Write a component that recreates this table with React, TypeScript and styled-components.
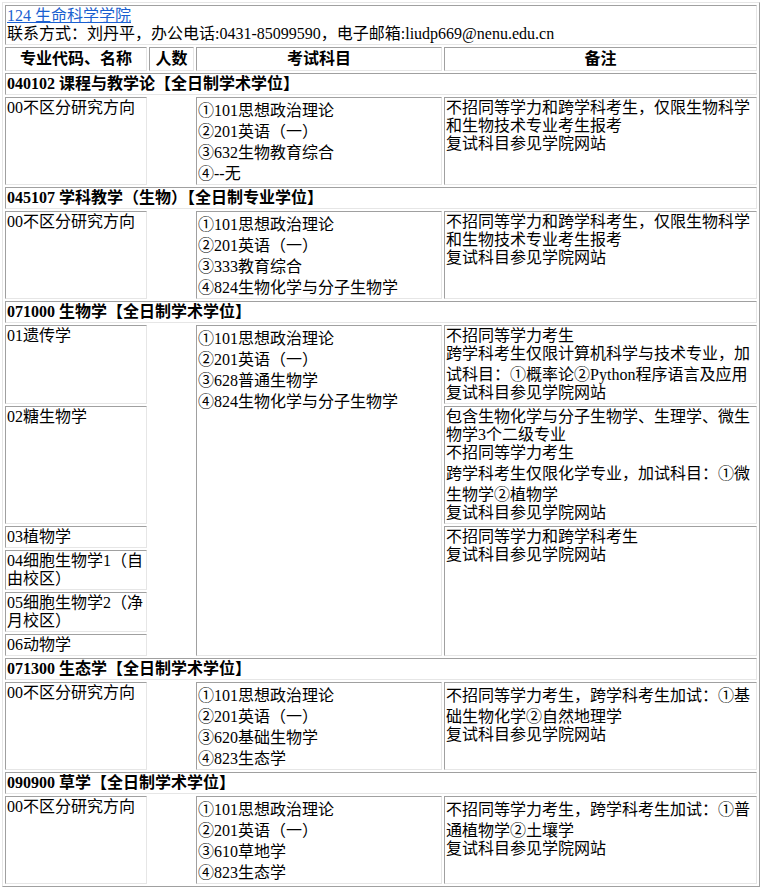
import React from "react";
import styled, { createGlobalStyle } from "styled-components";

const Global = createGlobalStyle`
  html, body { margin: 0; padding: 0; background: #ffffff; }
  body {
    font-family: "Liberation Serif", "Noto Sans CJK SC", serif;
    font-size: 16px;
    color: #000000;
  }
`;

const Page = styled.div`
  padding: 2px 0 0 2px;
`;

const Table = styled.table`
  width: 758px;
  table-layout: fixed;
  border-collapse: separate;
  border-spacing: 2px;
  empty-cells: hide;
  border-style: solid;
  border-width: 1px;
  border-color: #e6e6e6 #a0a0a0 #a0a0a0 #e6e6e6;
  font-size: 16px;
  line-height: 18px;
`;

const Cell = styled.td<{ $center?: boolean }>`
  box-sizing: border-box;
  padding: 1px;
  vertical-align: top;
  text-align: ${(p) => (p.$center ? "center" : "left")};
  border-style: solid;
  border-width: 1px;
  border-color: #a0a0a0 #e6e6e6 #e6e6e6 #a0a0a0;
  overflow-wrap: anywhere;
`;

const Head = styled.th`
  box-sizing: border-box;
  padding: 1px;
  font-weight: bold;
  text-align: center;
  vertical-align: middle;
  line-height: 20px;
  border-style: solid;
  border-width: 1px;
  border-color: #a0a0a0 #e6e6e6 #e6e6e6 #a0a0a0;
`;

const SectionCell = styled(Cell)`
  font-weight: bold;
  vertical-align: middle;
`;

const Link = styled.a`
  color: #1a5fd0;
  text-decoration: underline;
`;

const Line = styled.div``;

const Circ = styled.span`
  font-family: "Noto Sans CJK SC", "DejaVu Sans", sans-serif;
  font-weight: normal;
  line-height: 20.67px;
`;

function withCircles(text: string) {
  const parts = text.split(/([①②③④⑤⑥⑦⑧⑨])/);
  return parts.map((p, i) =>
    /[①②③④⑤⑥⑦⑧⑨]/.test(p) ? <Circ key={i}>{p}</Circ> : <React.Fragment key={i}>{p}</React.Fragment>
  );
}

type Remark = { span: number; lines: string[] };
type Section = {
  code: string;
  title: string;
  dirs: string[];
  exams: string[];
  remarks: Remark[];
};

const STD_REMARK = ["不招同等学力和跨学科考生，仅限生物科学和生物技术专业考生报考", "复试科目参见学院网站"];

const sections: Section[] = [
  {
    code: "040102",
    title: "课程与教学论【全日制学术学位】",
    dirs: ["00不区分研究方向"],
    exams: ["①101思想政治理论", "②201英语（一）", "③632生物教育综合", "④--无"],
    remarks: [{ span: 1, lines: STD_REMARK }],
  },
  {
    code: "045107",
    title: "学科教学（生物）【全日制专业学位】",
    dirs: ["00不区分研究方向"],
    exams: ["①101思想政治理论", "②201英语（一）", "③333教育综合", "④824生物化学与分子生物学"],
    remarks: [{ span: 1, lines: STD_REMARK }],
  },
  {
    code: "071000",
    title: "生物学【全日制学术学位】",
    dirs: ["01遗传学", "02糖生物学", "03植物学", "04细胞生物学1（自由校区）", "05细胞生物学2（净月校区）", "06动物学"],
    exams: ["①101思想政治理论", "②201英语（一）", "③628普通生物学", "④824生物化学与分子生物学"],
    remarks: [
      {
        span: 1,
        lines: [
          "不招同等学力考生",
          "跨学科考生仅限计算机科学与技术专业，加试科目：①概率论②Python程序语言及应用",
          "复试科目参见学院网站",
        ],
      },
      {
        span: 1,
        lines: [
          "包含生物化学与分子生物学、生理学、微生物学3个二级专业",
          "不招同等学力考生",
          "跨学科考生仅限化学专业，加试科目：①微生物学②植物学",
          "复试科目参见学院网站",
        ],
      },
      { span: 4, lines: ["不招同等学力和跨学科考生", "复试科目参见学院网站"] },
    ],
  },
  {
    code: "071300",
    title: "生态学【全日制学术学位】",
    dirs: ["00不区分研究方向"],
    exams: ["①101思想政治理论", "②201英语（一）", "③620基础生物学", "④823生态学"],
    remarks: [{ span: 1, lines: ["不招同等学力考生，跨学科考生加试：①基础生物化学②自然地理学", "复试科目参见学院网站"] }],
  },
  {
    code: "090900",
    title: "草学【全日制学术学位】",
    dirs: ["00不区分研究方向"],
    exams: ["①101思想政治理论", "②201英语（一）", "③610草地学", "④823生态学"],
    remarks: [{ span: 1, lines: ["不招同等学力考生，跨学科考生加试：①普通植物学②土壤学", "复试科目参见学院网站"] }],
  },
];

function SectionRows({ s }: { s: Section }) {
  const n = s.dirs.length;
  // map row index -> remark starting at that row
  const remarkAt: Record<number, Remark> = {};
  let idx = 0;
  s.remarks.forEach((r) => {
    remarkAt[idx] = r;
    idx += r.span;
  });
  return (
    <>
      <tr>
        <SectionCell colSpan={4}>
          {s.code} {s.title}
        </SectionCell>
      </tr>
      {s.dirs.map((d, i) => (
        <tr key={d}>
          <Cell>{d}</Cell>
          {i === 0 && <Cell rowSpan={n}></Cell>}
          {i === 0 && (
            <Cell rowSpan={n}>
              {s.exams.map((e) => (
                <Line key={e}>{withCircles(e)}</Line>
              ))}
            </Cell>
          )}
          {remarkAt[i] && (
            <Cell rowSpan={remarkAt[i].span}>
              {remarkAt[i].lines.map((l) => (
                <Line key={l}>{withCircles(l)}</Line>
              ))}
            </Cell>
          )}
        </tr>
      ))}
    </>
  );
}

export default function App() {
  return (
    <>
      <Global />
      <Page>
        <Table>
          <colgroup>
            <col style={{ width: 142 }} />
            <col style={{ width: 45 }} />
            <col style={{ width: 246 }} />
            <col style={{ width: 313 }} />
          </colgroup>
          <tbody>
            <tr>
              <Cell colSpan={4}>
                <Line>
                  <Link href="#">124 生命科学学院</Link>
                </Line>
                <Line>联系方式：刘丹平，办公电话:0431-85099590，电子邮箱:liudp669@nenu.edu.cn</Line>
              </Cell>
            </tr>
            <tr>
              <Head>专业代码、名称</Head>
              <Head>人数</Head>
              <Head>考试科目</Head>
              <Head>备注</Head>
            </tr>
            {sections.map((s) => (
              <SectionRows key={s.code} s={s} />
            ))}
          </tbody>
        </Table>
      </Page>
    </>
  );
}
